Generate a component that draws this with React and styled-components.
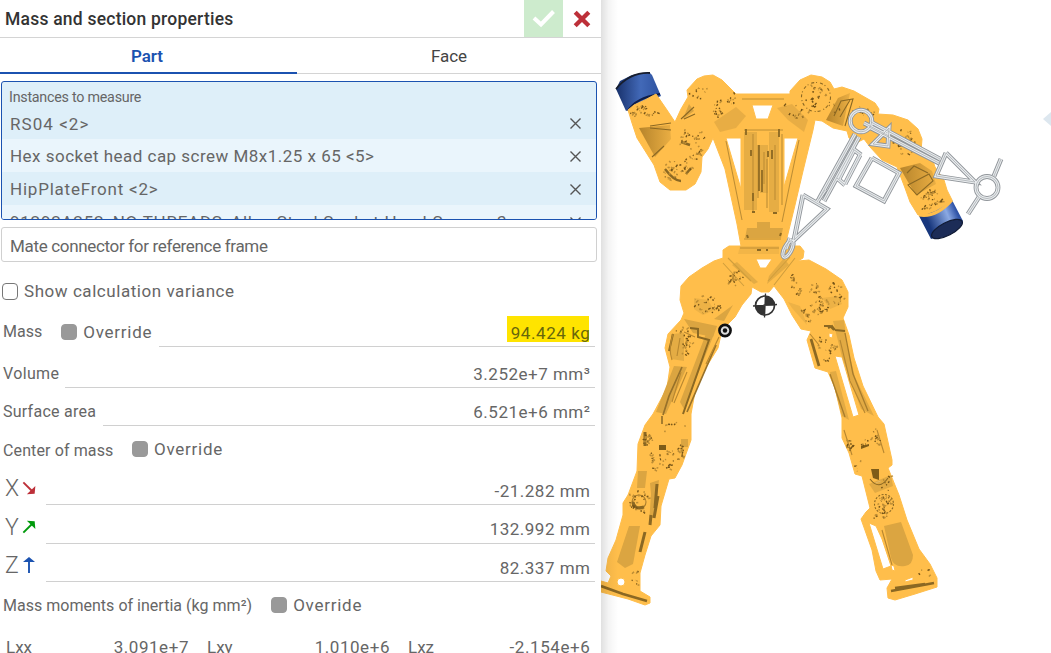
import React from "react";
import styled, { createGlobalStyle } from "styled-components";

const Global = createGlobalStyle`
  * { box-sizing: border-box; }
  body { margin: 0; background: #fff; overflow: hidden; font-family: Roboto, "Liberation Sans", sans-serif; color: #666; }
`;
const Page = styled.div`display: flex; width: 1051px; height: 653px; overflow: hidden;`;
const Panel = styled.section`
  position: relative; z-index: 1; flex: 0 0 601px; height: 653px; background: #fff; overflow: hidden;
  display: flex; flex-direction: column;
`;
const Header = styled.header`display: flex; flex: none; height: 38px; border-bottom: 1px solid #d4d4d4;`;
const Title = styled.h1`
  margin: 0; padding-left: 5px; flex: 1; font-size: 17.5px; font-weight: 500; line-height: 38px; color: #333;
  letter-spacing: ${(p) => p.$ls || 0}px;
`;
const HeaderButton = styled.button`
  border: 0; padding: 0; height: 37px; width: ${(p) => p.$w}px; background: ${(p) => p.$bg || "#fff"};
  display: flex; align-items: center; justify-content: center;
`;
const Tabs = styled.nav`display: flex; flex: none; height: 36px; border-bottom: 1px solid #d4d4d4;`;
const Tab = styled.div`
  width: ${(p) => p.$w}px; height: 36px; text-align: center; font-size: 17px; line-height: 37px;
  letter-spacing: ${(p) => p.$ls || 0}px; padding-right: ${(p) => (p.$active ? 3 : 0)}px;
  color: ${(p) => (p.$active ? "#1b52b0" : "#444")}; font-weight: ${(p) => (p.$active ? 600 : 400)};
  border-bottom: ${(p) => (p.$active ? "2.5px solid #1b52b0" : "0")};
`;
const Instances = styled.div`
  flex: none; margin: 7px 4px 0 1px; height: 139px; border: 1px solid #1b52b0; border-radius: 3px; overflow: hidden; background: #deeff9;
`;
const Caption = styled.div`height: 26px; padding: 5px 0 0 7px; font-size: 14.3px; line-height: 20px; letter-spacing: ${(p) => p.$ls || 0}px;`;
const Instance = styled.div`
  height: ${(p) => p.$h || 33}px; padding: ${(p) => (p.$h ? 0 : 1)}px 14px 0 8px; display: flex; align-items: center; justify-content: space-between;
  background: ${(p) => (p.$light ? "#eaf5fc" : "#deeff9")};
`;
const Text = styled.span`font-size: 17px; line-height: 20px; white-space: nowrap; letter-spacing: ${(p) => p.$ls || 0}px;`;
const MateInput = styled.div`
  flex: none; margin: 7px 4px 0 1px; height: 35px; border: 1px solid #d0d0d0; border-radius: 3px; padding: 3px 8px 0; display: flex; align-items: center;
`;
const CheckRow = styled.label`flex: none; display: flex; align-items: center; gap: 6px; height: 44px; padding: 14px 0 0 2px;`;
const Box = styled.span`
  width: 16px; height: ${(p) => (p.$filled ? 16 : 17)}px; border-radius: 4px; flex: none;
  background: ${(p) => (p.$filled ? "#999" : "#fff")}; border: 1px solid ${(p) => (p.$filled ? "#999" : "#777")};
`;
const Row = styled.div`flex: none; height: ${(p) => p.$h}px; display: flex; align-items: flex-end; padding: 0 6px 0 3px;`;
const Label = styled.span`
  font-size: 16px; line-height: 20px; padding-bottom: ${(p) => p.$pb ?? 5}px; white-space: nowrap; letter-spacing: ${(p) => p.$ls || 0}px;
`;
const Override = styled.label`
  display: flex; align-items: center; gap: 6px; height: 20px; margin: 0 0 ${(p) => p.$mb ?? 5}px ${(p) => p.$ml}px;
`;
const Value = styled.div`
  flex: 1; margin-left: ${(p) => p.$ml}px; border-bottom: 1px solid #d0d0d0; text-align: right; padding: 0 4.5px ${(p) => p.$pb ?? 3}px 0; white-space: nowrap;
`;
const Highlight = styled.mark`
  color: #67670c; background: linear-gradient(#ffe400, #ffe400) 0 0 / 82px 26px no-repeat; padding: 8px 0 0 4px;
`;
const Axis = styled.span`
  width: 43px; padding: 0 0 2px 2px; height: 32px; display: flex; align-items: center; gap: 2px; font-size: 23px; font-weight: 300; color: #666;
`;
const AxisLetter = styled.span`width: 15px;`;
const Matrix = styled.div`flex: none; display: flex; padding: 9px 10.5px 0 6px;`;
const Cell = styled.div`display: flex; width: ${(p) => p.$w}px; margin-right: ${(p) => p.$mr || 0}px; justify-content: space-between;`;
const Viewport = styled.main`position: relative; flex: 1; min-width: 0; background: #fff;`;
const Shade = styled.div`
  position: absolute; inset: 0 auto 0 0; width: 17px; background: linear-gradient(90deg, rgba(0,0,0,.12), rgba(0,0,0,.045) 45%, rgba(0,0,0,0));
`;
const Scene = styled.svg`display: block; width: 450px; height: 653px;`;

const Remove = () => (
  <svg width="13" height="13" viewBox="0 0 13 13" stroke="#555" strokeWidth="1.4"><path d="M1.5 1.5l10 10M11.5 1.5l-10 10" /></svg>
);
const axes = [
  { l: "X", c: "#bd3039", r: 135, v: "-21.282 mm", h: 39, pb: 3 },
  { l: "Y", c: "#009a0c", r: 45, v: "132.992 mm", h: 39, pb: 4 },
  { l: "Z", c: "#1b52b0", r: 0, v: "82.337 mm", h: 38, pb: 3 },
];
const AxisArrow = ({ color, turn }) => (
  <svg width="14" height="18" viewBox="-7 -9 14 18" overflow="visible">
    <g transform={`rotate(${turn})`}><path d="M0 8V-5" stroke={color} strokeWidth="1.9" /><path d="M-6 -3L0 -8L6 -3Z" fill={color} /></g>
  </svg>
);

/* Dark edge fragments scattered in an ellipse around each joint: cx, cy, rx, ry, count, rotation. */
const clusters = [
  [639, 111, 9, 4, 22, -30], [650, 114, 8, 3, 12, -20], [673, 170, 9, 11, 30, 45], [688, 165, 4, 9, 14, 15], [696, 145, 8, 16, 26, 15], [684, 139, 4, 11, 14, 15], [699, 93, 10, 7, 12, 0], [720, 108, 7, 10, 18, 40], [731, 100, 5, 7, 10, 20],
  [816, 97, 11, 11, 28, 0], [795, 112, 14, 8, 16, 20], [834, 104, 8, 10, 8, 0], [866, 112, 10, 5, 16, 25], [904, 143, 12, 14, 24, 0], [908, 140, 4, 4, 14, 0], [929, 196, 9, 5, 24, -20], [932, 205, 13, 2, 22, -25],
  [736, 278, 6, 9, 18, 45], [708, 305, 15, 10, 34, 10], [732, 279, 4, 6, 12, 40], [687, 347, 6, 14, 26, 0], [681, 331, 9, 3, 8, 0],
  [793, 281, 5, 7, 12, 0], [798, 292, 3, 4, 9, 0], [819, 306, 9, 10, 38, 15], [814, 289, 5, 7, 14, 0], [834, 288, 7, 5, 10, 0], [839, 300, 5, 7, 12, 0], [806, 314, 3, 10, 18, -20], [824, 350, 6, 14, 18, -15], [833, 347, 3, 3, 12, 0],
  [655, 458, 8, 12, 18, 0], [669, 460, 7, 10, 20, 0], [680, 453, 4, 9, 22, 0], [648, 440, 5, 6, 20, 0], [673, 427, 12, 5, 8, 0], [640, 502, 12, 11, 30, 0],
  [850, 446, 3, 8, 16, -15], [877, 437, 3, 9, 16, -15], [867, 443, 7, 5, 8, 0], [859, 466, 4, 8, 6, 0], [884, 504, 8, 8, 36, 0], [887, 481, 6, 10, 8, 0], [881, 516, 9, 4, 12, 0], [636, 578, 6, 9, 8, 10], [924, 573, 7, 5, 5, 0],
];
const fragments = (() => {
  let s = 9173;
  const rnd = () => ((s = (s * 16807) % 2147483647) / 2147483647);
  const out = ["", ""];
  clusters.forEach(([cx, cy, rx, ry, n, rot]) => {
    const t = (rot * Math.PI) / 180;
    for (let i = 0; i < n; i++) {
      const a = rnd() * 6.283, r = Math.sqrt(rnd());
      const u = Math.cos(a) * r * rx, v = Math.sin(a) * r * ry;
      const x = cx + u * Math.cos(t) - v * Math.sin(t), y = cy + u * Math.sin(t) + v * Math.cos(t);
      const k = rnd();
      out[k > 0.5 ? 0 : 1] += `M${x.toFixed(1)} ${y.toFixed(1)}l${(rnd() * 4 - 1.6).toFixed(1)} ${(rnd() * 4 - 2.4).toFixed(1)}`;
    }
  });
  return out;
})();

const body = "M628 110L634 105L645 100L656 94L667 110L675 122L681 109L688 97L687 90L697 79L704 76L713 75L722 80L736 94H790V91L800 80L811 75L822 77L830 82L834 89L842 87L854 91L875 103L879 109L878 114L893 115L908 120L918 129L922 139L921 151L932 158L935 167L944 180L947 190L952 200L944 207L930 214L918 215L910 202L905 188L897 167L882 160L870 147L864 139L858 142L849 138L847 131L833 128L822 121L815 120L813 130L803 171L795 205L785 246H800L804 251L803 258L798 261L809 260L826 269L842 280L848 292V307L843 318L849 335L854 358L863 386L878 417L884 424L892 460V465L888 468L899 495L907 520L919 549L930 564L937 578V587L915 594L895 600L888 598L887 588L892 579L880 580L876 571L872 550L861 519L866 512L870 508L862 476L855 474L849 453L842 438V418L835 388L828 372L815 368L807 340L811 331L801 329L792 315L784 299L777 290L774 286L769 292H761L752 287L751 294L742 305L735 317L722 330L718 348L705 369L695 392L691 414V440L682 465L675 478L669 479L661 506L660 525L651 536L645 555L640 573L640 591L650 597V603L645 605L628 599L601 592V581L608 583L611 576L606 571L608 558L616 540L623 515V503L628 495L637 471L638 444L645 425L653 414L667 388L670 367L665 348L668 334L681 320L684 313L680 300L681 286L689 277L702 268L714 261L723 258L723 250L729 246H741L737 224L725 169L713 138L708 149L702 157L701 172L695 184L686 190H670L660 182L654 165L637 138L632 123Z";
const holes = "M752 105H773L768 119H756Z M726 138H741V189Z M784 138H798L784 187Z M756 259H772L766 268H760Z M835 356L842 357L859 415L853 417Z M829 333L833 334L832 338L829 337Z M869 523L876 526L882 539L891 566L883 569Z M617 582A4 4 0 1 0 625 582A4 4 0 1 0 617 582Z M891 565l3 1 1 5-3-1z M875 482l6-2v2l-6 2z M905 580l8-3v3l-8 2z";

const Robot = () => (
  <g>
    <path d="M616 89L620 81L632 75L649 72L652 75L661 96L626 111Z" fill="url(#canL)" />
    <path d="M616 89Q630 72 650 73" fill="none" stroke="#171d2c" strokeWidth="1.8" /><path d="M628 111Q635 98 660 94" fill="none" stroke="#0e1d4a" strokeWidth="2" />
    <path d={body + holes} fill="#ffbe4b" fillRule="evenodd" stroke="#ffbe4b" strokeWidth="1" strokeLinejoin="round" />
    <g fill="#dba541">
      <path d="M639 128L670 125L671 139L655 157Z" fill="url(#shade)" /><path d="M689 104L694 111L683 119Z" /><path d="M714 122L736 107L746 116L736 128L720 132Z" opacity=".65" /><path d="M777 108L792 104L808 120L804 132L788 120Z" opacity=".65" />
      <path d="M744 132H757V210H744Z M769 132H779V212H769Z M760 145h8v48h-8z" opacity=".7" /><path d="M747 228H783L781 238H745Z M757 222h13v6h-13z" /><path d="M740 246H779V254H738Z" opacity=".35" />
      <path d="M838 98L850 93L843 126L826 120Z" fill="url(#shade)" /><path d="M900 168L920 163L932 171L936 184L916 195L908 182Z" fill="url(#shade)" />
      <path d="M737 262L758 282 754 284 732 265ZM784 258L769 276 767 284 789 265Z" opacity=".75" /><path d="M684 319L717 326 713 337 693 333ZM733 305L724 321 714 319Z" />
      <path d="M674 366L687 367 666 414 656 412ZM707 331L714 334 684 409 680 402Z" /><path d="M671 334L684 333 684 361 671 359Z" opacity=".75" />
      <path d="M788 302L800 306 807 325 792 308Z" opacity=".5" /><path d="M833 321L844 320 847 345 855 377 874 416 861 409 842 357Z" opacity=".8" /><path d="M830 372L836 371 849 420 842 416Z" opacity=".8" />
      <path d="M638 471L647 471 645 488 637 488ZM650 483L659 480 655 512 649 525 651 494Z" /><path d="M629 526H640L633 564L625 568L617 562Z" /><path d="M681 439h7v8h-7z" />
      <path d="M869 484L891 475L893 486L875 493Z" opacity=".8" /><path d="M884 526L901 522L913 555Q913 565 905 566Q894 568 891 558Z" />
      <path d="M694 298L708 300 714 310 703 315 694 309ZM822 298L838 296 842 304 830 309Z" opacity=".5" />
    </g>
    <g fill="none" stroke="#8b6823" strokeWidth="1.1">
      <path d="M650 126L671 123M650 128L671 130M652 157L664 146M681 119L694 107M684 119L695 114" />
      <path d="M742 99H784M744 130H783M753 134V211M758 145V198M764 152V184M767 159V208M775 145V200M782 134V205M744 239H781M740 248H779M726 141L742 220M799 140L782 222" stroke="#bd8d35" />
      <path d="M759 145V191M762 170V192" strokeWidth="1.7" /><path d="M751 150v6M753 193v8M768 151v6M779 129v8M772 150v9M746 129v6" strokeWidth="1.8" /><path d="M747 235l1 3M781 233l-1 3M752 212h3M773 213h4M757 250h4M766 250h2" strokeWidth="2" />
      <path d="M834 116L841 101L853 99L845 126M840 117L850 100M907 173L914 166L928 173M908 185L929 174L933 181L917 195ZM852 111L872 113" />
      <path d="M723 263L744 286M728 258L751 281M795 258L774 285M790 257L768 281" stroke="#d09e3d" />
      <path d="M673 334L669 351M690 328L698 329L698 337L709 340L683 414" strokeWidth="2" /><path d="M682 367L669 396L663 415M716 345L687 412M662 424V416" stroke="#97712a" strokeWidth="1.7" />
      <path d="M673 334Q668 349 672 360M684 332L695 337M681 372L672 402M719 337L706 364M687 372L674 403" stroke="#b88730" />
      <path d="M811 339L819 366" strokeWidth="2.7" /><path d="M835 330L845 331M828 328L832 326 835 330" strokeWidth="2" /><path d="M845 333L853 374L868 411M830 374L845 417" stroke="#a87c2c" strokeWidth="1.3" />
      <path d="M810 334L819 345M840 340L850 381L865 413" stroke="#b88730" />
      <path d="M645 432V446M657 484L655 508M651 515L650 525M645 532L640 552M658 496L654 518" strokeWidth="3" /><path d="M601 586L623 594L647 601" strokeWidth="2.6" /><path d="M844 430L852 455M877 430L884 453M882 530L892 565" stroke="#b88730" />
      <path d="M891 591L934 583M895 588L925 584" strokeWidth="2.5" /><path d="M870 479Q879 491 888 478" />
      <circle cx="816" cy="97" r="14.5" strokeDasharray="3 2 1 3" /><circle cx="884" cy="504" r="9.5" strokeDasharray="2 1.5" /><circle cx="639" cy="502" r="7" stroke="#aa7e2e" /><path d="M633 502Q634 510 644 507" strokeWidth="3" />
      <path d="M665 169Q674 181 681 181M686 174l5-6M681 142l9 3" strokeWidth="2.4" /><path d="M824 326h6l4 4" strokeWidth="2" /><path d="M680 338l-3 18M861 584l0 0" stroke="#b88730" />
    </g>
    <path d="M871 469H879V480L873 478ZM659 445h7v5h-7zM861 446l8-2v2l-8 3z" fill="#7e5c18" />
    <path d={fragments[0]} stroke="#745317" strokeWidth="1.4" /><path d={fragments[1]} stroke="#bd8d35" strokeWidth="1.5" />
    <path d="M919 216Q937 213 952 200L963 221L955 231L931 239Z" fill="url(#canR)" /><ellipse cx="947" cy="229" rx="17" ry="6.5" transform="rotate(-27 947 229)" fill="#1c2c57" stroke="#111b35" strokeWidth="1.2" />
    <path d="M919 215Q936 218 952 200" fill="none" stroke="#ffbe4b" strokeWidth="3" />
  </g>
);

const triadShapes = "M855 134L819 199M859 137L824 201M871 122L940 159M869 127L939 163M803 195L827 209L794 240L803 195M825 190L817 202M790 238L786 249M946 153L975 182L936 176L946 153M872 158L899 173L884 201L856 186L872 158M854 150L839 179M860 155L845 184M853 149L861 155M837 178L845 185M994 176L1001 159M979 197L968 214M864 123L889 136M873 144L889 128L888 146Z";
const triadLayers = [
  { color: "#90959a", w: 4.8 },
  { color: "#e9ecee", w: 3 },
  { color: "#a9aeb2", w: 0.8 },
];

const Triad = () => (
  <g fill="none" strokeLinejoin="miter">
    {triadLayers.map((l) => (
      <g key={l.color} stroke={l.color} strokeWidth={l.w}>
        <path d={triadShapes} /><circle cx="861" cy="121" r="10.8" /><circle cx="987" cy="187.5" r="11" /><ellipse cx="788" cy="249" rx="3.5" ry="9" transform="rotate(27 788 249)" />
      </g>
    ))}
  </g>
);

export default function App() {
  return (
    <>
      <Global />
      <Page>
        <Panel>
          <Header>
            <Title $ls={0.22}>Mass and section properties</Title>
            <HeaderButton $w={39} $bg="#cdebcd" aria-label="Accept"><svg width="24" height="20" viewBox="0 0 24 20"><path d="M2 9L9 15.5L21.5 2.5" fill="none" stroke="#fff" strokeWidth="4" /></svg></HeaderButton>
            <HeaderButton $w={38} aria-label="Close"><svg width="18" height="18" viewBox="0 0 18 18"><path d="M2.2 2.2L15.8 15.8M15.8 2.2L2.2 15.8" stroke="#bd3039" strokeWidth="4.3" /></svg></HeaderButton>
          </Header>
          <Tabs><Tab $w={297} $active>Part</Tab><Tab $w={304} $ls={-0.1}>Face</Tab></Tabs>
          <Instances>
            <Caption $ls={-0.25}>Instances to measure</Caption>
            <Instance $h={31}><Text $ls={1.05}>RS04 &lt;2&gt;</Text><Remove /></Instance>
            <Instance $light><Text $ls={0.48}>Hex socket head cap screw M8x1.25 x 65 &lt;5&gt;</Text><Remove /></Instance>
            <Instance><Text $ls={0.78}>HipPlateFront &lt;2&gt;</Text><Remove /></Instance>
            <Instance $light><Text $ls={0.75}>91292A252_NO THREADS_Alloy Steel Socket Head Screw &lt;3&gt;</Text><Remove /></Instance>
          </Instances>
          <MateInput><Text $ls={-0.33}>Mate connector for reference frame</Text></MateInput>
          <CheckRow><Box /><Text $ls={0.55}>Show calculation variance</Text></CheckRow>
          <Row $h={41}><Label>Mass</Label><Override $ml={19}><Box $filled /><Text $ls={0.75}>Override</Text></Override><Value $ml={7}><Highlight><Text $ls={0.6}>94.424 kg</Text></Highlight></Value></Row>
          <Row $h={41}><Label $ls={0.35} $pb={4}>Volume</Label><Value $ml={6}><Text $ls={0.5}>3.252e+7 mm³</Text></Value></Row>
          <Row $h={38}><Label $ls={0.25} $pb={4}>Surface area</Label><Value $ml={7}><Text $ls={0.5}>6.521e+6 mm²</Text></Value></Row>
          <Row $h={40}><Label $pb={5} $ls={0.12}>Center of mass</Label><Override $ml={18.5} $mb={7}><Box $filled /><Text $ls={0.75}>Override</Text></Override></Row>
          {axes.map((a) => (
            <Row key={a.l} $h={a.h}><Axis><AxisLetter>{a.l}</AxisLetter><AxisArrow color={a.c} turn={a.r} /></Axis><Value $ml={0} $pb={a.pb}><Text $ls={0.5}>{a.v}</Text></Value></Row>
          ))}
          <Row $h={46}><Label $pb={12.5} $ls={0.02}>Mass moments of inertia (kg mm²)</Label><Override $ml={19} $mb={13}><Box $filled /><Text $ls={0.75}>Override</Text></Override></Row>
          <Matrix>
            <Cell $w={183} $mr={18}><Text>Lxx</Text><Text $ls={0.55}>3.091e+7</Text></Cell>
            <Cell $w={183} $mr={18}><Text>Lxy</Text><Text $ls={0.55}>1.010e+6</Text></Cell>
            <Cell $w={182.5}><Text>Lxz</Text><Text $ls={0.6}>-2.154e+6</Text></Cell>
          </Matrix>
        </Panel>
        <Viewport>
          <Scene viewBox="601 0 450 653">
            <defs>
              <linearGradient id="canL"><stop stopColor="#18316b" /><stop offset=".55" stopColor="#4269b8" /><stop offset="1" stopColor="#2d519e" /></linearGradient>
              <linearGradient id="canR" gradientTransform="rotate(-20)"><stop stopColor="#18377d" /><stop offset=".48" stopColor="#8ba9e3" /><stop offset=".7" stopColor="#3054a7" /><stop offset="1" stopColor="#294993" /></linearGradient>
              <linearGradient id="shade"><stop stopColor="#b6842b" /><stop offset="1" stopColor="#eaae43" /></linearGradient>
            </defs>
            <Robot />
            <Triad />
            <circle cx="765" cy="305.5" r="9.5" fill="#fff" stroke="#333" strokeWidth="1.7" /><path d="M765 305.5V296A9.5 9.5 0 0 1 774.5 305.5ZM765 305.5V315A9.5 9.5 0 0 1 755.5 305.5Z" fill="#333" /><path d="M765.5 293.5L764.5 317.5M753 306L777 304.5" stroke="#333" strokeWidth="1.3" />
            <circle cx="725" cy="330.5" r="5.6" fill="#ddd" stroke="#111" strokeWidth="2.6" /><circle cx="725" cy="330.5" r="2.2" fill="#111" />
            <path d="M1043 119L1051 112V126Z" fill="#dde7ef" />
          </Scene>
          <Shade />
        </Viewport>
      </Page>
    </>
  );
}
